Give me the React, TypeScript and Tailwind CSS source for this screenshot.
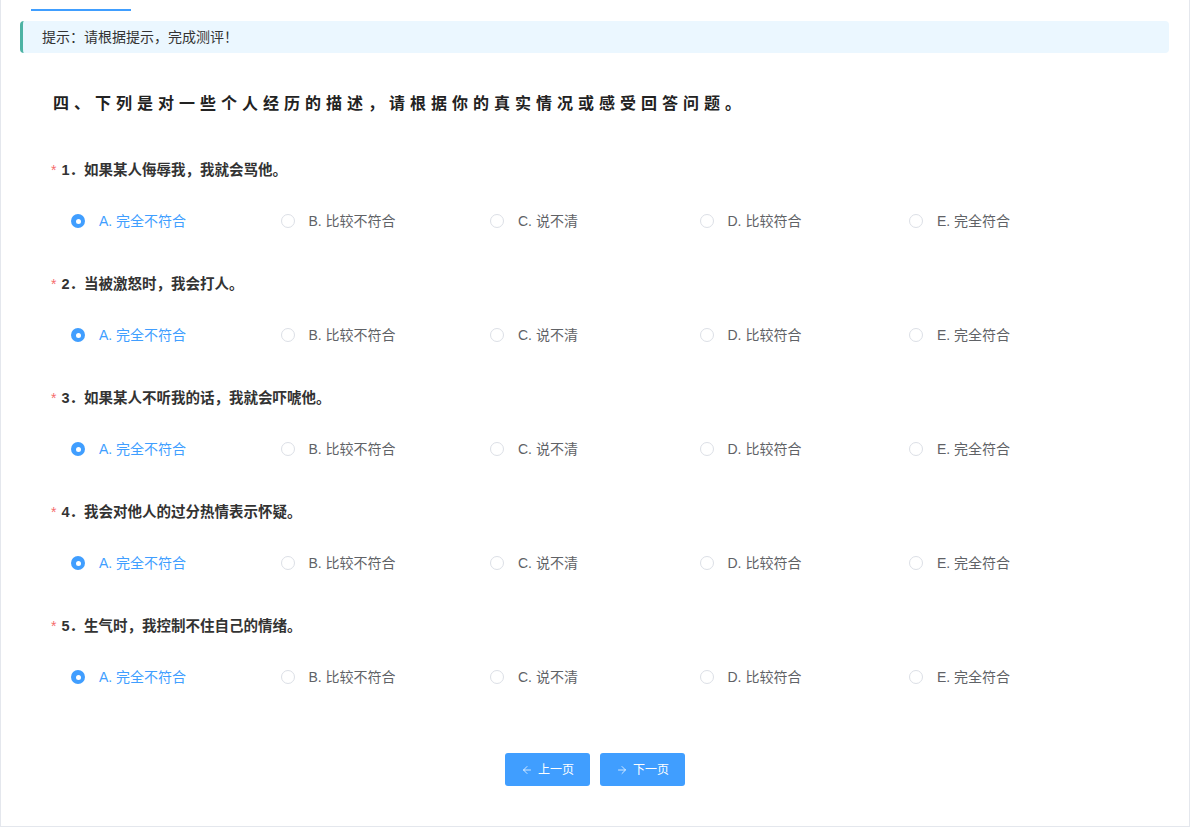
import React from "react";
import { ArrowLeft, ArrowRight } from "lucide-react";

const questions = [
  "如果某人侮辱我，我就会骂他。",
  "当被激怒时，我会打人。",
  "如果某人不听我的话，我就会吓唬他。",
  "我会对他人的过分热情表示怀疑。",
  "生气时，我控制不住自己的情绪。",
];

const options = ["A. 完全不符合", "B. 比较不符合", "C. 说不清", "D. 比较符合", "E. 完全符合"];

const FONT = { fontFamily: '"Liberation Sans", "Noto Sans CJK SC", sans-serif' };

function Radio({ checked }: { checked: boolean }) {
  return checked ? (
    <span className="w-[14px] h-[14px] rounded-full bg-[#409eff] flex items-center justify-center shrink-0">
      <span className="w-[5px] h-[5px] rounded-full bg-white" />
    </span>
  ) : (
    <span className="w-[14px] h-[14px] rounded-full border border-[#dcdfe6] bg-white shrink-0" />
  );
}

export default function App() {
  return (
    <div
      className="w-[1190px] h-[827px] bg-white border-l border-r border-b border-[#e4e7ed] flex flex-col overflow-hidden"
      style={FONT}
    >
      <div className="ml-[30px] mt-[9px] w-[100px] h-[2px] bg-[#409eff]" />
      <div className="mt-[10px] ml-[19px] w-[1149px] h-[32px] rounded-[4px] border-l-[3px] border-[#4db3a4] bg-[#ebf7ff] flex items-center pl-[19px] text-[14px] text-[#333]">
        提示：请根据提示，完成测评！
      </div>
      <div
        className="mt-[43px] ml-[52px] h-[16px] leading-[16px] text-[16px] font-bold text-[#222] tracking-[5px]"
        style={{ fontFamily: '"Liberation Serif", "Noto Sans CJK SC", serif' }}
      >
        四、下列是对一些个人经历的描述，请根据你的真实情况或感受回答问题。
      </div>
      <div className="mt-[48px] flex flex-col">
        {questions.map((q, i) => (
          <div key={i} className="flex flex-col h-[114px] shrink-0">
            <div className="ml-[50px] h-[20px] leading-[20px] flex items-center text-[14.5px] font-bold text-[#333]">
              <span className="text-[#f56c6c] font-normal mr-[5px] text-[14px]">*</span>
              <span>{i + 1}．{q}</span>
            </div>
            <div className="mt-[31px] ml-[70px] h-[20px] leading-[20px] flex items-center">
              {options.map((o, j) => (
                <div key={j} className="w-[209.5px] flex items-center gap-[14px] shrink-0">
                  <Radio checked={j === 0} />
                  <span className={`text-[14px] leading-[20px] ${j === 0 ? "text-[#409eff]" : "text-[#606266]"}`}>{o}</span>
                </div>
              ))}
            </div>
          </div>
        ))}
      </div>
      <div className="mt-[23px] flex justify-center gap-[10px]">
        <button className="w-[85px] h-[33px] rounded-[3px] bg-[#409eff] text-white text-[12px] flex items-center justify-center gap-[5px]">
          <ArrowLeft size={12} strokeWidth={1.5} />
          <span>上一页</span>
        </button>
        <button className="w-[85px] h-[33px] rounded-[3px] bg-[#409eff] text-white text-[12px] flex items-center justify-center gap-[5px]">
          <ArrowRight size={12} strokeWidth={1.5} />
          <span>下一页</span>
        </button>
      </div>
    </div>
  );
}
